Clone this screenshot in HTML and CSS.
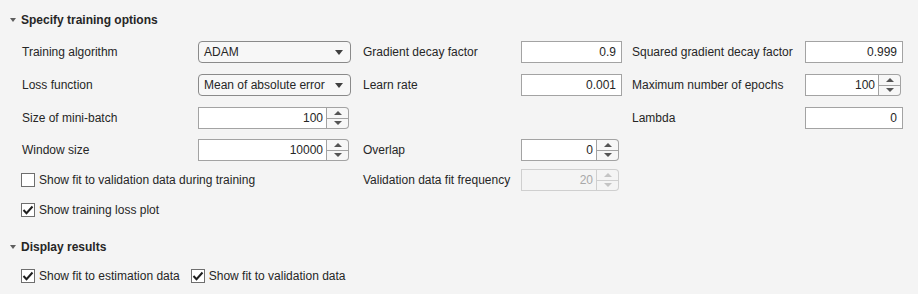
FILE: index.html
```html
<!DOCTYPE html>
<html lang="en">
<head>
    <meta charset="UTF-8">
    <meta name="viewport" content="width=device-width, initial-scale=1.0">
    <title>Training options</title>
    <link rel="stylesheet" href="styles.css">
</head>
<body>
    <!-- Specify training options -->
    <div class="section-head"><span class="caret"></span>Specify training options</div>

    <div class="options-grid">
        <!-- row 1 -->
        <div class="label">Training algorithm</div>
        <div class="dropdown w153"><span>ADAM</span><span class="drop-arrow"></span></div>
        <div class="label">Gradient decay factor</div>
        <div class="edit w101">0.9</div>
        <div class="label">Squared gradient decay factor</div>
        <div class="edit w98">0.999</div>

        <!-- row 2 -->
        <div class="label">Loss function</div>
        <div class="dropdown w153"><span>Mean of absolute error</span><span class="drop-arrow"></span></div>
        <div class="label">Learn rate</div>
        <div class="edit w101">0.001</div>
        <div class="label">Maximum number of epochs</div>
        <div class="spinner w96">
            <span class="spin-value">100</span>
            <span class="spin-btns"><span class="spin-up"></span><span class="spin-down"></span></span>
        </div>

        <!-- row 3 -->
        <div class="label">Size of mini-batch</div>
        <div class="spinner w151">
            <span class="spin-value">100</span>
            <span class="spin-btns"><span class="spin-up"></span><span class="spin-down"></span></span>
        </div>
        <div></div>
        <div></div>
        <div class="label">Lambda</div>
        <div class="edit w98">0</div>

        <!-- row 4 -->
        <div class="label">Window size</div>
        <div class="spinner w151">
            <span class="spin-value">10000</span>
            <span class="spin-btns"><span class="spin-up"></span><span class="spin-down"></span></span>
        </div>
        <div class="label">Overlap</div>
        <div class="spinner w98">
            <span class="spin-value">0</span>
            <span class="spin-btns"><span class="spin-up"></span><span class="spin-down"></span></span>
        </div>
        <div></div>
        <div></div>

        <!-- row 5 -->
        <label class="check span2"><span class="box"></span>Show fit to validation data during training</label>
        <div class="label">Validation data fit frequency</div>
        <div class="spinner w98 disabled">
            <span class="spin-value">20</span>
            <span class="spin-btns"><span class="spin-up"></span><span class="spin-down"></span></span>
        </div>
        <div></div>
        <div></div>

        <!-- row 6 -->
        <label class="check span2">
            <span class="box"><svg width="12" height="12" viewBox="0 0 12 12"><polyline points="1.5,6 4.5,9.2 10.5,2.5" fill="none" stroke="#1e1e1e" stroke-width="2"/></svg></span>Show training loss plot
        </label>
    </div>

    <!-- Display results -->
    <div class="section-head second"><span class="caret"></span>Display results</div>
    <div class="result-checks">
        <label class="check">
            <span class="box"><svg width="12" height="12" viewBox="0 0 12 12"><polyline points="1.5,6 4.5,9.2 10.5,2.5" fill="none" stroke="#1e1e1e" stroke-width="2"/></svg></span>Show fit to estimation data
        </label>
        <label class="check">
            <span class="box"><svg width="12" height="12" viewBox="0 0 12 12"><polyline points="1.5,6 4.5,9.2 10.5,2.5" fill="none" stroke="#1e1e1e" stroke-width="2"/></svg></span>Show fit to validation data
        </label>
    </div>
</body>
</html>
```

FILE: styles.css
```css
body {
    margin: 0;
    background-color: #f4f4f4;
    font-family: "Liberation Sans", Arial, sans-serif;
    font-size: 12px;
    color: #262626;
}
.section-head {
    display: flex;
    align-items: center;
    height: 22px;
    margin-top: 9px;
    padding-left: 10px;
    font-weight: bold;
}
.section-head.second {
    margin-top: 11px;
}
.caret {
    width: 0;
    height: 0;
    border-left: 3.5px solid transparent;
    border-right: 3.5px solid transparent;
    border-top: 4px solid #5e5e5e;  /* 아래 방향 삼각형 */
    margin-right: 5px;
}
.options-grid {
    display: grid;
    grid-template-columns: 176px 165px 158px 111px 173px 98px;
    grid-template-rows: 33px 33px 33px 31px 29px 30px;
    align-items: center;
    margin-top: 4.5px;
    padding-left: 22px;
}
.label {
    white-space: nowrap;
}
.span2 {
    grid-column: span 2;
}
.w153 { width: 153px; }
.w151 { width: 151px; }
.w101 { width: 101px; }
.w98 { width: 98px; }
.w96 { width: 96px; }

/* 드롭다운 */
.dropdown {
    box-sizing: border-box;
    height: 22px;
    display: flex;
    align-items: center;
    justify-content: space-between;
    padding: 0 7px 0 5px;
    border: 1px solid #8a8a8a;
    border-radius: 4px;
    background-color: #f7f7f7;
}
.drop-arrow {
    width: 0;
    height: 0;
    border-left: 4px solid transparent;
    border-right: 4px solid transparent;
    border-top: 5px solid #404040;
}

/* 숫자 입력칸 */
.edit {
    box-sizing: border-box;
    height: 22px;
    line-height: 20px;
    padding-right: 5px;
    text-align: right;
    border: 1px solid #a3a3a3;
    background-color: #ffffff;
}
.spinner {
    box-sizing: border-box;
    height: 22px;
    display: flex;
}
.spin-value {
    flex: 1;
    line-height: 20px;
    padding-right: 3px;
    text-align: right;
    border: 1px solid #a3a3a3;
    background-color: #ffffff;
}
.spin-btns {
    width: 21px;
    display: flex;
    flex-direction: column;
    border: 1px solid #a3a3a3;
    border-left: none;
    border-radius: 0 4px 4px 0;
    background-color: #f7f7f7;
}
.spin-up, .spin-down {
    flex: 1;
    display: flex;
    align-items: center;
    justify-content: center;
}
.spin-down {
    border-top: 1px solid #a3a3a3;
}
.spin-up::after, .spin-down::after {
    content: "";
    width: 0;
    height: 0;
    border-left: 4px solid transparent;
    border-right: 4px solid transparent;
}
.spin-up::after {
    border-bottom: 4px solid #555555;
}
.spin-down::after {
    border-top: 4px solid #555555;
}
.spinner.disabled .spin-value {
    color: #a8a8a8;
    background-color: #f4f4f4;
    border-color: #cfcfcf;
}
.spinner.disabled .spin-btns {
    border-color: #cfcfcf;
    background-color: #f4f4f4;
}
.spinner.disabled .spin-down {
    border-top-color: #cfcfcf;
}
.spinner.disabled .spin-up::after {
    border-bottom-color: #c4c4c4;
}
.spinner.disabled .spin-down::after {
    border-top-color: #c4c4c4;
}

/* 체크박스 */
.check {
    display: flex;
    align-items: center;
    white-space: nowrap;
    margin-left: -1px;
}
.box {
    box-sizing: border-box;
    width: 14px;
    height: 14px;
    margin-right: 4px;
    border: 1px solid #6e6e6e;
    background-color: #ffffff;
    display: flex;
    align-items: center;
    justify-content: center;
}
.result-checks {
    display: flex;
    gap: 12px;
    height: 14px;
    margin-top: 11px;
    padding-left: 22px;
}
```
